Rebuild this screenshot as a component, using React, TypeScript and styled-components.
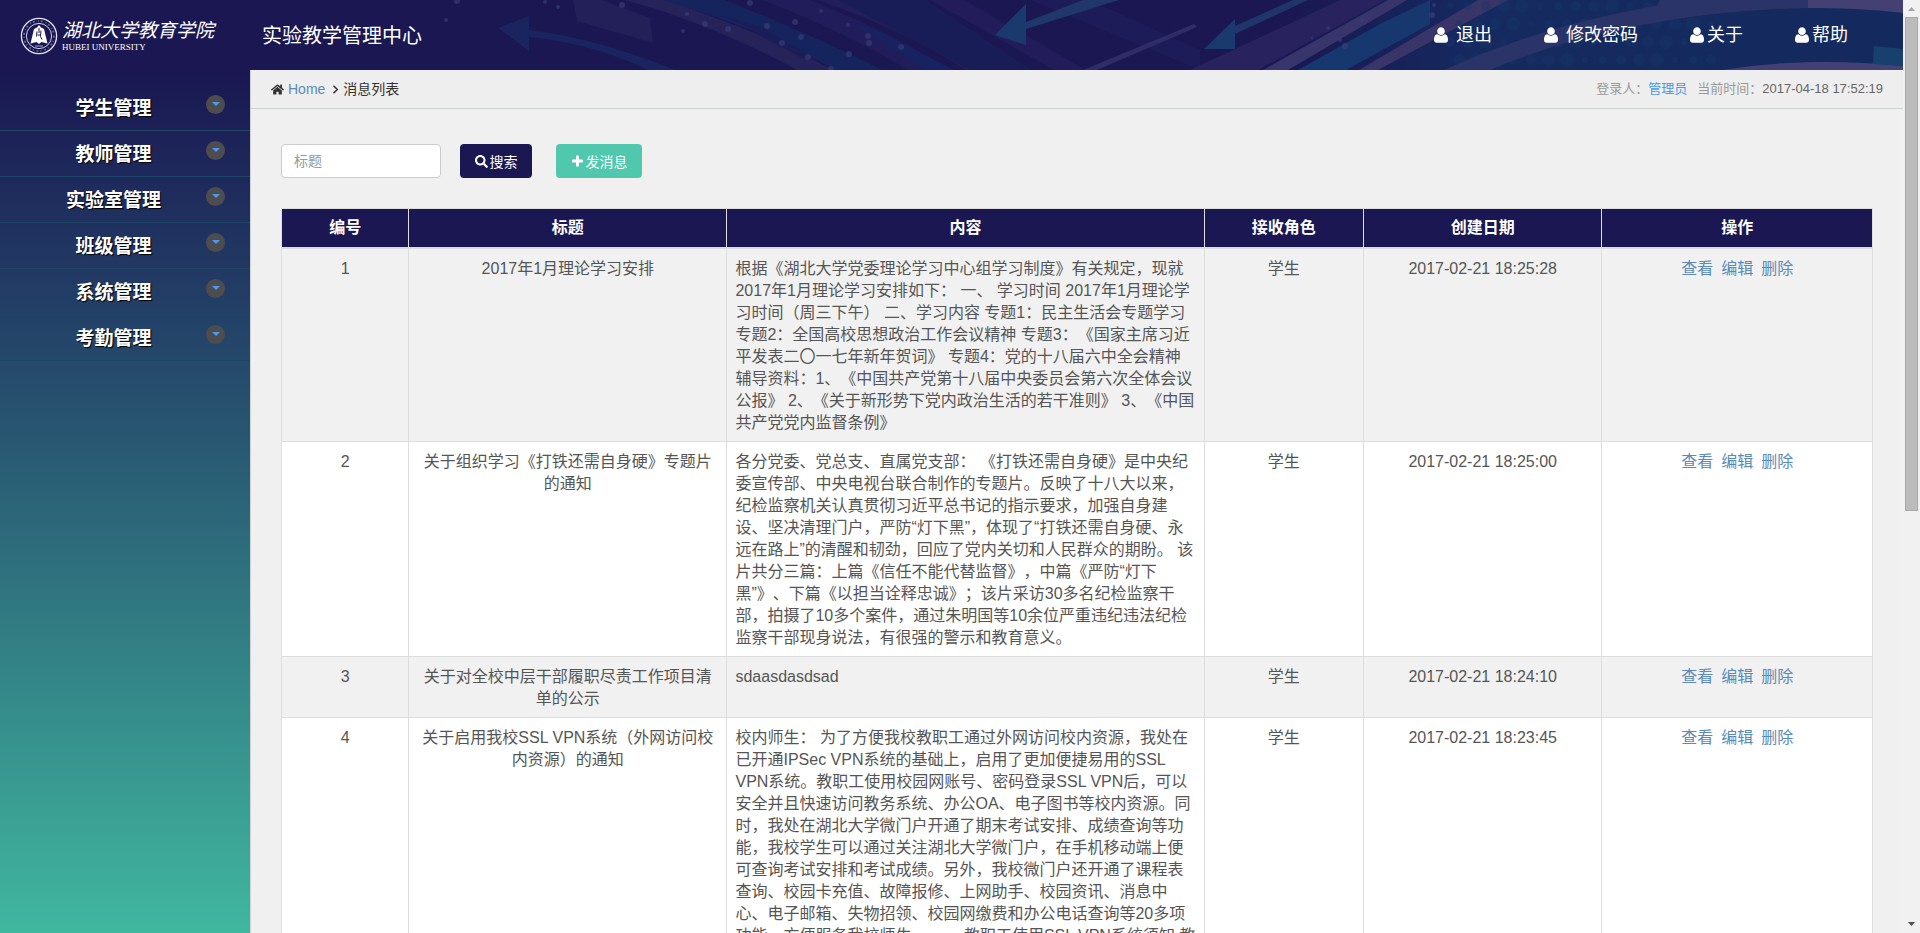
import React from "react";
import styled, { createGlobalStyle } from "styled-components";
import { FaHome, FaSearch } from "react-icons/fa";

const NAVY = "#1a1752";
const LINK = "#5b8ab8";

const GlobalStyle = createGlobalStyle`
  * { box-sizing: border-box; }
  body {
    margin: 0;
    overflow: hidden;
    background: #f0f0f0;
    color: #555;
    font-family: "Liberation Sans", "Noto Sans CJK SC", sans-serif;
    font-size: 14px;
    text-spacing-trim: space-all;
  }
  a { text-decoration: none; }
`;

const Shell = styled.div`
  display: flex;
  height: 100vh;
  overflow: hidden;
`;

const Page = styled.div`
  display: flex;
  flex: 1;
  flex-direction: column;
  min-width: 0;
`;

const Header = styled.header`
  position: relative;
  display: flex;
  flex: none;
  align-items: center;
  height: 70px;
  background: ${NAVY};
  color: #fff;
`;

const HeaderArt = styled.svg`
  position: absolute;
  inset: 0;
  width: 100%;
  height: 100%;
`;

const Brand = styled.a`
  position: relative;
  display: flex;
  flex: none;
  align-items: center;
  gap: 4px;
  width: 250px;
  padding: 2px 0 0 20px;
  color: #fff;
`;

const BrandText = styled.span`
  display: flex;
  flex-direction: column;
  white-space: nowrap;
`;

const BrandName = styled.span`
  font-size: 19px;
  font-style: italic;
  line-height: 22px;
`;

const BrandLatin = styled.span`
  font-family: "Liberation Serif", serif;
  font-size: 9px;
  line-height: 10px;
`;

const SystemTitle = styled.h1`
  position: relative;
  margin: 0;
  padding: 2px 0 0 12px;
  font-size: 20px;
  font-weight: 400;
  line-height: 28px;
`;

const TopNav = styled.nav`
  position: relative;
  display: flex;
  gap: 52px;
  margin-left: auto;
  padding-right: 55px;
`;

const TopLink = styled.a<{ $gap: number }>`
  display: flex;
  align-items: center;
  gap: ${(p) => p.$gap}px;
  color: #fff;
  font-size: 18px;
  line-height: 26px;
`;

const Body = styled.div`
  display: flex;
  flex: 1;
  min-height: 0;
`;

const Sidebar = styled.nav`
  flex: none;
  width: 250px;
  padding-top: 15px;
  background: linear-gradient(#1a1752 0%, #25496b 34%, #40b79f 100%);
`;

const MenuItem = styled.button`
  display: flex;
  align-items: center;
  width: 100%;
  height: 46px;
  padding: 0 25px 0 21px;
  border: 0;
  border-bottom: 1px solid #1c4566;
  background: none;
  color: #fff;
  font-family: inherit;
  font-size: 19px;
  font-weight: 700;
  line-height: 26px;
  text-shadow: 1px 1px 1px #000;
`;

const MenuLabel = styled.span`
  flex: 1;
  padding-top: 2px;
`;

const MenuBadge = styled.span`
  display: flex;
  align-items: center;
  justify-content: center;
  width: 19px;
  height: 19px;
  margin-bottom: 7px;
  border-radius: 50%;
  background: #4d4d50;
`;

const Main = styled.main`
  flex: 1;
  min-width: 0;
  overflow: hidden;
  border-left: 1px solid #ccd1d3;
`;

const InfoBar = styled.div`
  display: flex;
  align-items: center;
  justify-content: space-between;
  height: 39px;
  padding: 0 20px;
  border-bottom: 1px solid #ccd1d1;
  background: #eee;
`;

const Crumbs = styled.div`
  display: flex;
  align-items: center;
  gap: 4px;
  color: #333;
  line-height: 20px;
`;

const CrumbLink = styled.a`
  margin-right: 3px;
  color: ${LINK};
`;

const Session = styled.div`
  display: flex;
  gap: 10px;
  color: #999;
  font-size: 13px;
  line-height: 20px;
`;

const SessionUser = styled.a`
  color: #4a98ea;
`;

const SessionTime = styled.span`
  color: #666;
`;

const Content = styled.div`
  padding: 35px 30px;
`;

const Toolbar = styled.form`
  display: flex;
  margin-bottom: 30px;
`;

const SearchInput = styled.input`
  width: 160px;
  height: 34px;
  margin-right: 19px;
  padding: 6px 12px;
  border: 1px solid #ccc;
  border-radius: 4px;
  background: #fff;
  font-family: inherit;
  font-size: 14px;
  &::placeholder { color: #999; }
`;

const ToolButton = styled.button<{ $tone: string; $width: number }>`
  display: flex;
  align-items: center;
  justify-content: center;
  gap: 2px;
  width: ${(p) => p.$width}px;
  height: 34px;
  margin-right: 24px;
  padding: 0;
  border: 0;
  border-radius: 4px;
  background: ${(p) => p.$tone};
  color: #fff;
  font-family: inherit;
  font-size: 14px;
`;

const Table = styled.table`
  width: 100%;
  border-collapse: collapse;
  table-layout: fixed;
  background: #fff;
  font-size: 16px;
  line-height: 22px;
`;

const HeadCell = styled.th<{ $width: number }>`
  width: ${(p) => p.$width}%;
  padding: 8px;
  border: 1px solid #ddd;
  border-bottom: 2px solid #ddd;
  background: ${NAVY};
  color: #fff;
`;

const Row = styled.tr`
  &:nth-child(odd) { background: #f1f1f1; }
`;

const Cell = styled.td<{ $align?: string }>`
  padding: 9px 8px 7px;
  border: 1px solid #ddd;
  text-align: ${(p) => p.$align ?? "center"};
  vertical-align: top;
`;

const Actions = styled.div`
  display: flex;
  justify-content: center;
  gap: 8px;
`;

const ActionLink = styled.a`
  color: ${LINK};
`;

const ScrollTrack = styled.div`
  display: flex;
  flex: none;
  flex-direction: column;
  align-items: center;
  width: 17px;
  background: #f1f1f1;
`;

const ScrollArrow = styled.svg`
  flex: none;
  width: 17px;
  height: 17px;
`;

const ScrollLane = styled.div`
  flex: 1;
  width: 13px;
`;

const ScrollThumb = styled.div`
  height: 55%;
  border: 1px solid #a8a8a8;
  background: #bcbcbc;
`;

const UserIcon = () => (
  <svg width="14" height="18" viewBox="0 0 1408 1792" fill="currentColor" aria-hidden="true">
    <path d="M1408 1405q0 120-73 189.5t-194 69.5h-874q-121 0-194-69.5t-73-189.5q0-53 3.5-103.5t14-109 26.5-108.5 43-97.5 62-81 85.5-53.5 111.5-20q9 0 42 21.5t74.5 48 108 48 133.5 21.5 133.5-21.5 108-48 74.5-48 42-21.5q61 0 111.5 20t85.5 53.5 62 81 43 97.5 26.5 108.5 14 109 3.5 103.5zm-320-893q0 159-112.5 271.5t-271.5 112.5-271.5-112.5-112.5-271.5 112.5-271.5 271.5-112.5 271.5 112.5 112.5 271.5z" />
  </svg>
);

const PlusIcon = () => (
  <svg width="13" height="13" viewBox="64 64 1664 1664" fill="currentColor" aria-hidden="true">
    <path d="M1600 736v192q0 40-28 68t-68 28h-416v416q0 40-28 68t-68 28h-192q-40 0-68-28t-28-68v-416h-416q-40 0-68-28t-28-68v-192q0-40 28-68t68-28h416v-416q0-40 28-68t68-28h192q40 0 68 28t28 68v416h416q40 0 68 28t28 68z" />
  </svg>
);

const Seal = () => (
  <svg width="38" height="38" viewBox="0 0 38 38" fill="none" stroke="#e4e4f2" aria-hidden="true">
    <circle cx="19" cy="19" r="17.6" strokeWidth="1.3" />
    <circle cx="19" cy="19" r="12.6" strokeWidth="0.9" />
    <circle cx="19" cy="19" r="15" strokeWidth="1.6" strokeDasharray="2 3 1 2" opacity="0.4" />
    <path d="M10.500 26.500 14 12l3-1.500 2-2.500 2 2.500 3 1.500 3.500 14.500-6-1.500-2.500 2-2.500-2z" fill="#fff" stroke="none" />
    <path d="M19 11v5M17 14.500l-0.500 5M21 13.500l-0.500 6 1.500 3M17.500 18h3" stroke={NAVY} strokeWidth="1" />
    <path d="M15 29h8" strokeWidth="1" opacity="0.7" />
  </svg>
);

const FLECKS: [number, number, number][] = [
  [545, 2, 2], [558, 7, 2], [622, 5, 3], [687, 14, 2], [683, 31, 2], [705, 24, 3], [728, 29, 3],
  [750, 3, 3], [767, 26, 3], [782, 43, 3], [795, 22, 3], [808, 57, 3], [821, 11, 2], [848, 25, 2],
  [868, 36, 3], [869, 43, 3], [901, 47, 3], [849, 54, 3], [801, 37, 3], [831, 69, 3], [446, 20, 2], [457, 1, 3],
  [1312, 38, 1], [1328, 28, 2], [1340, 40, 2], [1345, 46, 3], [1362, 20, 2], [1432, 15, 3], [1434, 5, 2],
];

const HALFTONE = Array.from({ length: 60 }, (_, i) => {
  const col = i % 15;
  const row = Math.floor(i / 15);
  return { x: 1450 + col * 18 + (row % 2) * 9, y: 6 + row * 18, r: 3 + ((col + row) % 5) };
});

const Backdrop = () => (
  <HeaderArt viewBox="0 0 1903 70" preserveAspectRatio="none" aria-hidden="true">
    <defs>
      <linearGradient id="glow" x1="0" x2="1" y1="0" y2="0">
        <stop offset="0" stopColor="#152a60" stopOpacity="0" />
        <stop offset="0.3" stopColor="#152a60" />
        <stop offset="1" stopColor="#142a5e" />
      </linearGradient>
    </defs>
    <path d="M1290 0H1903V70H1290z" fill="url(#glow)" />
    <path d="M498 28 529 16V51z" fill="#1a2560" />
    <path d="M529 30C580 36 630 52 675 70H648C610 52 575 42 529 37z" fill="#1a2560" />
    <path d="M573 0h29l48 18 3 25-76-22z" fill="#231f58" />
    <path d="M625 0h40C730 22 785 44 833 70h-36C745 42 690 18 625 0z" fill="#26235b" />
    <path d="M663 0h62C780 22 835 46 882 70h-46C785 42 725 18 663 0z" fill="#16245e" />
    <path d="M727 17l35 11 60 34-20-4z" fill="#1a1d57" />
    <path d="M762 0h48c50 20 100 44 141 70h-43C865 44 815 20 762 0z" fill="#211d5a" />
    <path d="M850 22l26 8 78 40h-28z" fill="#172260" />
    <path d="M818 0h20c70 24 115 48 150 70h-22C925 44 880 22 818 0z" fill="#221e5b" />
    <path d="M838 0h88l105 70h-60z" fill="#181d57" />
    <path d="M930 0h34l122 70h-32z" fill="#221d5a" />
    <path d="M1030 0h60l110 50v20z" fill="#1e1b59" />
    <path d="M995 35 1026 4V45z" fill="#1a3a6e" />
    <path d="M1026 22 1083 0h36L1026 29z" fill="#1f376b" />
    <path d="M1083 70 1194 24l3 3L1097 70z" fill="#2f2c68" />
    <path d="M1190 70 1340 0h45L1258 70z" fill="#28235e" />
    <path d="M1204 49 1235 19V49z" fill="#1a3a6e" />
    <path d="M1235 26 1293 0h15L1235 34z" fill="#20366b" />
    <path d="M1263 70 1388 0h19L1288 70z" fill="#38346c" />
    <path d="M1298 70 1380 24l50-24v24L1346 70z" fill="#17386e" />
    <path d="M1359 70 1478 0h30L1378 70z" fill="#393568" />
    {HALFTONE.map((d) => (
      <circle key={`${d.x}-${d.y}`} cx={d.x} cy={d.y} r={d.r} fill="#1a3768" opacity="0.4" />
    ))}
    <path d="M1444 70C1540 26 1660-4 1808-10V8C1680 10 1570 36 1490 70z" fill="#2b3468" />
    <path d="M1660 0h148v8c-60 1-110 6-160 16z" fill="#2b3468" />
    <path d="M1808 0h95v13c-32-4-63-5-95-5z" fill="#454073" />
    <path d="M1723 70c60-10 120-10 180-4v4z" fill="#454073" />
    <path d="M1874 46l29 3v17l-30-2z" fill="#17406f" />
    {FLECKS.map(([x, y, r]) => (
      <circle key={`${x}-${y}`} cx={x} cy={y} r={r} fill="#3d3f7c" opacity="0.6" />
    ))}
  </HeaderArt>
);

const NAV = [
  { label: "退出", gap: 8 },
  { label: "修改密码", gap: 8 },
  { label: "关于", gap: 3 },
  { label: "帮助", gap: 3 },
];

const MENU = ["学生管理", "教师管理", "实验室管理", "班级管理", "系统管理", "考勤管理"];

const COLUMNS = [
  { label: "编号", width: 8 },
  { label: "标题", width: 20 },
  { label: "内容", width: 30 },
  { label: "接收角色", width: 10 },
  { label: "创建日期", width: 15 },
  { label: "操作", width: 17 },
];

const MESSAGES = [
  {
    id: 1,
    title: "2017年1月理论学习安排",
    body: "根据《湖北大学党委理论学习中心组学习制度》有关规定，现就2017年1月理论学习安排如下： 一、 学习时间 2017年1月理论学习时间（周三下午） 二、学习内容 专题1：民主生活会专题学习 专题2：全国高校思想政治工作会议精神 专题3：《国家主席习近平发表二〇一七年新年贺词》 专题4：党的十八届六中全会精神 辅导资料：1、《中国共产党第十八届中央委员会第六次全体会议公报》 2、《关于新形势下党内政治生活的若干准则》 3、《中国共产党党内监督条例》",
    role: "学生",
    date: "2017-02-21 18:25:28",
  },
  {
    id: 2,
    title: "关于组织学习《打铁还需自身硬》专题片的通知",
    body: "各分党委、党总支、直属党支部： 《打铁还需自身硬》是中央纪委宣传部、中央电视台联合制作的专题片。反映了十八大以来，纪检监察机关认真贯彻习近平总书记的指示要求，加强自身建设、坚决清理门户，严防“灯下黑”，体现了“打铁还需自身硬、永远在路上”的清醒和韧劲，回应了党内关切和人民群众的期盼。 该片共分三篇：上篇《信任不能代替监督》，中篇《严防“灯下黑”》、下篇《以担当诠释忠诚》；该片采访30多名纪检监察干部，拍摄了10多个案件，通过朱明国等10余位严重违纪违法纪检监察干部现身说法，有很强的警示和教育意义。",
    role: "学生",
    date: "2017-02-21 18:25:00",
  },
  {
    id: 3,
    title: "关于对全校中层干部履职尽责工作项目清单的公示",
    body: "sdaasdasdsad",
    role: "学生",
    date: "2017-02-21 18:24:10",
  },
  {
    id: 4,
    title: "关于启用我校SSL VPN系统（外网访问校内资源）的通知",
    body: "校内师生： 为了方便我校教职工通过外网访问校内资源，我处在已开通IPSec VPN系统的基础上，启用了更加便捷易用的SSL VPN系统。教职工使用校园网账号、密码登录SSL VPN后，可以安全并且快速访问教务系统、办公OA、电子图书等校内资源。同时，我处在湖北大学微门户开通了期末考试安排、成绩查询等功能，我校学生可以通过关注湖北大学微门户，在手机移动端上便可查询考试安排和考试成绩。另外，我校微门户还开通了课程表查询、校园卡充值、故障报修、上网助手、校园资讯、消息中心、电子邮箱、失物招领、校园网缴费和办公电话查询等20多项功能，方便服务我校师生。 一、教职工使用SSL VPN系统须知 教职工可使用校园网账号登录。",
    role: "学生",
    date: "2017-02-21 18:23:45",
  },
];

export default function App() {
  return (
    <>
      <GlobalStyle />
      <Shell>
        <Page>
          <Header>
            <Backdrop />
            <Brand href="#">
              <Seal />
              <BrandText>
                <BrandName>湖北大学教育学院</BrandName>
                <BrandLatin>HUBEI UNIVERSITY</BrandLatin>
              </BrandText>
            </Brand>
            <SystemTitle>实验教学管理中心</SystemTitle>
            <TopNav>
              {NAV.map((item) => (
                <TopLink key={item.label} href="#" $gap={item.gap}>
                  <UserIcon />
                  {item.label}
                </TopLink>
              ))}
            </TopNav>
          </Header>
          <Body>
            <Sidebar>
              {MENU.map((label) => (
                <MenuItem key={label} type="button">
                  <MenuLabel>{label}</MenuLabel>
                  <MenuBadge>
                    <svg width="8" height="4" viewBox="0 0 8 4" aria-hidden="true">
                      <path d="M0 0h8L4 4z" fill="#4a9bf0" />
                    </svg>
                  </MenuBadge>
                </MenuItem>
              ))}
            </Sidebar>
            <Main>
              <InfoBar>
                <Crumbs>
                  <FaHome size={13} aria-hidden="true" />
                  <CrumbLink href="#">Home</CrumbLink>
                  <svg width="7" height="9" viewBox="0 0 7 9" fill="none" stroke="#333" strokeWidth="1.500" aria-hidden="true">
                    <path d="M1.500 0.700 5.300 4.500 1.500 8.300" />
                  </svg>
                  <span>消息列表</span>
                </Crumbs>
                <Session>
                  <span>
                    登录人：<SessionUser href="#">管理员</SessionUser>
                  </span>
                  <span>
                    当前时间：<SessionTime>2017-04-18 17:52:19</SessionTime>
                  </span>
                </Session>
              </InfoBar>
              <Content>
                <Toolbar>
                  <SearchInput type="text" placeholder="标题" aria-label="标题" />
                  <ToolButton type="button" $tone={NAVY} $width={72}>
                    <FaSearch size={13} aria-hidden="true" />
                    搜索
                  </ToolButton>
                  <ToolButton type="button" $tone="#4fc8ae" $width={86}>
                    <PlusIcon />
                    发消息
                  </ToolButton>
                </Toolbar>
                <Table>
                  <thead>
                    <tr>
                      {COLUMNS.map((col) => (
                        <HeadCell key={col.label} $width={col.width} scope="col">
                          {col.label}
                        </HeadCell>
                      ))}
                    </tr>
                  </thead>
                  <tbody>
                    {MESSAGES.map((m) => (
                      <Row key={m.id}>
                        <Cell>{m.id}</Cell>
                        <Cell>{m.title}</Cell>
                        <Cell $align="left">{m.body}</Cell>
                        <Cell>{m.role}</Cell>
                        <Cell>{m.date}</Cell>
                        <Cell>
                          <Actions>
                            <ActionLink href="#">查看</ActionLink>
                            <ActionLink href="#">编辑</ActionLink>
                            <ActionLink href="#">删除</ActionLink>
                          </Actions>
                        </Cell>
                      </Row>
                    ))}
                  </tbody>
                </Table>
              </Content>
            </Main>
          </Body>
        </Page>
        <ScrollTrack aria-hidden="true">
          <ScrollArrow viewBox="0 0 17 17">
            <path d="M5 11h7L8.500 7z" fill="#a3a3a3" />
          </ScrollArrow>
          <ScrollLane>
            <ScrollThumb />
          </ScrollLane>
          <ScrollArrow viewBox="0 0 17 17">
            <path d="M5 6h7L8.500 10z" fill="#505050" />
          </ScrollArrow>
        </ScrollTrack>
      </Shell>
    </>
  );
}
